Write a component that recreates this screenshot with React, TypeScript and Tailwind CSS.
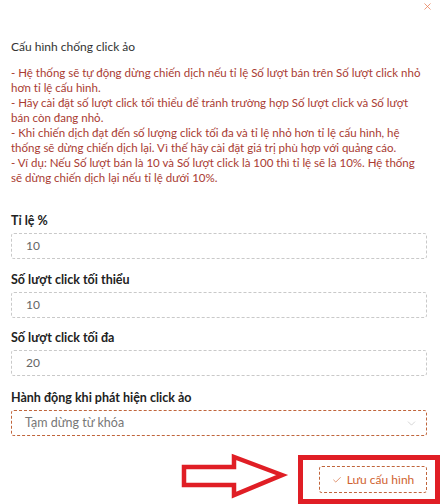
import { Check, ChevronDown, X } from "lucide-react";

const notes = [
  "- Hệ thống sẽ tự động dừng chiến dịch nếu tỉ lệ Số lượt bán trên Số lượt click nhỏ",
  "hơn tỉ lệ cấu hình.",
  "- Hãy cài đặt số lượt click tối thiểu để tránh trường hợp Số lượt click và Số lượt",
  "bán còn đang nhỏ.",
  "- Khi chiến dịch đạt đến số lượng click tối đa và tỉ lệ nhỏ hơn tỉ lệ cấu hình, hệ",
  "thống sẽ dừng chiến dịch lại. Vì thế hãy cài đặt giá trị phù hợp với quảng cáo.",
  "- Ví dụ: Nếu Số lượt bán là 10 và Số lượt click là 100 thì tỉ lệ sẽ là 10%. Hệ thống",
  "sẽ dừng chiến dịch lại nếu tỉ lệ dưới 10%.",
];

function Field({ label, value, className }: { label: string; value: string; className: string }) {
  return (
    <div className={className}>
      <div className="text-[12.5px] leading-4 font-bold text-[#222]">{label}</div>
      <div className="mt-[4px] h-[26px] border border-dashed border-[#c9c9c9] rounded-[3px] flex items-center pl-[14px] text-[12px] text-[#666]">
        {value}
      </div>
    </div>
  );
}

export default function App() {
  return (
    <div className="relative w-[440px] h-[504px] bg-white overflow-hidden font-['Lato',sans-serif]">
      <div className="flex justify-end pr-[7px] pt-[1px]">
        <X className="w-[11px] h-[11px] text-[#e8794f]" strokeWidth={1.6} />
      </div>

      <div className="pl-[11px] pr-[13px]">
        <div className="mt-[27px] text-[12px] leading-4 text-[#333]">Cấu hình chống click ảo</div>

        <div className="mt-[10px] text-[11.5px] leading-[15px] text-[#a93b32] whitespace-nowrap">
          {notes.map((line) => (
            <div key={line}>{line}</div>
          ))}
        </div>

        <Field label="Tỉ lệ %" value="10" className="mt-[28px]" />
        <Field label="Số lượt click tối thiểu" value="10" className="mt-[13px]" />
        <Field label="Số lượt click tối đa" value="20" className="mt-[12px]" />

        <div className="mt-[14px]">
          <div className="text-[12.5px] leading-4 font-bold text-[#222]">Hành động khi phát hiện click ảo</div>
          <div className="mt-[4px] h-[26px] border border-dashed border-[#c0653c] rounded-[3px] flex items-center justify-between pl-[13px] pr-[8px] text-[12.5px] text-[#777]">
            <span>Tạm dừng từ khóa</span>
            <ChevronDown className="w-[13px] h-[13px] text-[#c4c4c4]" strokeWidth={1.3} />
          </div>
        </div>

        <div className="mt-[30px] flex justify-end">
          <button className="h-[27px] w-[108px] border border-dashed border-[#c0653c] rounded-[3px] flex items-center justify-center gap-[5px] text-[12px] text-[#d0622f]">
            <Check className="w-[10px] h-[10px]" strokeWidth={1.6} />
            Lưu cấu hình
          </button>
        </div>
      </div>

      {/* annotation overlay */}
      <div className="absolute left-[298px] top-[455px] w-[142px] h-[49px] border-[5px] border-[#e01e25]" />
      <svg className="absolute left-[178px] top-[452px]" width="112" height="48" viewBox="0 0 112 48">
        <polygon
          points="6,15 56,15 56,5 104,23 56,43 56,33 6,33"
          fill="white"
          stroke="#e01e25"
          strokeWidth="4.5"
          strokeLinejoin="miter"
        />
      </svg>
    </div>
  );
}
